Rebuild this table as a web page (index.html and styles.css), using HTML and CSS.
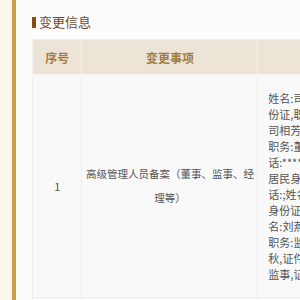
FILE: index.html
```html
<!DOCTYPE html>
<html>
<head>
<meta charset="utf-8">
<link rel="stylesheet" href="styles.css">
</head>
<body>
<div class="page">
  <div class="side"></div>
  <div class="main">
    <div class="title"><span class="bar"></span><span class="title-text">变更信息</span></div>
    <table class="tbl">
      <thead>
        <tr>
          <th class="c1">序号</th>
          <th class="c2">变更事项</th>
          <th class="c3">变更前</th>
          <th class="c4">变更后</th>
        </tr>
      </thead>
      <tbody>
        <tr>
          <td class="c1">1</td>
          <td class="c2 item">高级管理人员备案（董事、监事、经理等）</td>
          <td class="c3 detail">姓名:司马强,证件类型:中华人民共和国居民身<br>份证,职务:董事长,证件号码:****,公<br>司相芳,证件类型:中华人民共和国居民身份证,<br>职务:董事,电话:****;姓名:王建国,电<br>话:****,证件类型:中华人民共和国<br>居民身份证,职务:董事,电<br>话:;姓名:张伟,证件类型:中华人民共和国居民<br>身份证,职务:监事会主席,电话:****;姓<br>名:刘燕,证件类型:中华人民共和国居民身份证,<br>职务:监事,电话:****;姓名:李秋<br>秋,证件类型:中华人民共和国居民身份证,职务:<br>监事,证件号码:****</td>
          <td class="c4 detail">姓名:司马强,证件类型:中华人民共和国居民身份证</td>
        </tr>
        <tr>
          <td class="c1">2</td>
          <td class="c2 item">投资人变更</td>
          <td class="c3 detail">暂无</td>
          <td class="c4 detail">暂无</td>
        </tr>
      </tbody>
    </table>
  </div>
</div>
</body>
</html>
```

FILE: styles.css
```css
html, body {
  margin: 0;
  padding: 0;
  overflow: hidden;
  width: 300px;
  height: 300px;
}
body {
  font-family: "Noto Sans CJK SC", "Noto Sans", sans-serif;
  background: #fcfcfc;
}
.page {
  display: flex;
  min-height: 300px;
  width: 800px;
}
.side {
  width: 12px;
  flex: none;
  background: #fdf8ec;
  border-right: 4px solid #c9a04a;
}
.main {
  flex: 1;
  background: #fcfcfc;
  padding: 13px 0 0 16px;
}
.title {
  display: flex;
  align-items: center;
  height: 18px;
  margin-bottom: 8px;
}
.bar {
  width: 4px;
  height: 11px;
  background: #8a4a16;
  margin-right: 3px;
}
.title-text {
  font-size: 13px;
  line-height: 18px;
  color: #70492a;
}
.tbl {
  border-collapse: collapse;
  table-layout: fixed;
  border: 1px solid #eeeeee;
}
.tbl th {
  height: 34px;
  padding: 0;
  background: #ede4d8;
  color: #a27b3d;
  font-size: 12px;
  font-weight: bold;
  text-align: center;
  border: 1px solid #f5f1ec;
  border-top: none;
}
.tbl td {
  background: #f9f9f9;
  color: #555555;
  font-size: 11px;
  text-align: center;
  vertical-align: middle;
  border: 1px solid #eeeeee;
}
.c1 { width: 47px; }
.c2 { width: 177px; }
.c3 { width: 260px; }
.c4 { width: 200px; }
.tbl td.item {
  font-size: 10.5px;
  line-height: 24px;
  padding: 0;
}
.tbl td.detail {
  text-align: left;
  line-height: 16px;
  padding: 15px 10px;
  white-space: nowrap;
}
```
